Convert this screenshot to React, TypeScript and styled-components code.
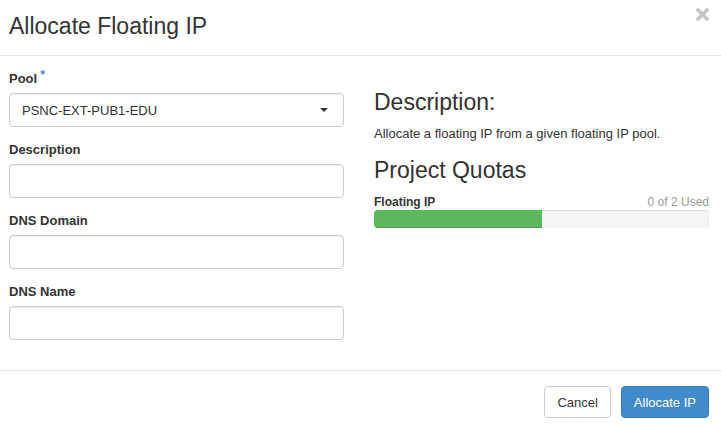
import styled, { createGlobalStyle } from "styled-components";

const GlobalStyle = createGlobalStyle`
  html, body {
    margin: 0;
    padding: 0;
    background: #fff;
  }
  body {
    font-family: "Liberation Sans", Arial, sans-serif;
    font-size: 13px;
    color: #333;
  }
  * {
    box-sizing: border-box;
  }
`;

const Modal = styled.div`
  width: 721px;
  height: 428px;
  background: #fff;
  display: flex;
  flex-direction: column;
`;

const Header = styled.header`
  height: 56px;
  padding: 0 12px 0 9px;
  border-bottom: 1px solid #e5e5e5;
  display: flex;
  align-items: center;
  justify-content: space-between;
`;

const Title = styled.h3`
  margin: 0;
  margin-top: -2px;
  font-size: 23px;
  font-weight: 400;
  color: #333;
`;

const Close = styled.button`
  border: 0;
  background: none;
  padding: 0;
  align-self: flex-start;
  margin-top: 8px;
  width: 13px;
  height: 13px;
  display: flex;
  cursor: pointer;
`;

const Body = styled.div`
  flex: 1;
  padding: 14px 12px 0 9px;
  display: grid;
  grid-template-columns: 335px 335px;
  column-gap: 30px;
`;

const FormColumn = styled.div`
  display: flex;
  flex-direction: column;
`;

const Field = styled.div`
  margin-bottom: 14px;
`;

const Label = styled.label`
  display: block;
  font-size: 13px;
  font-weight: 700;
  line-height: 18px;
  margin-bottom: 5px;
  color: #333;
`;

const Required = styled.span`
  color: #428bca;
  font-size: 12px;
  vertical-align: top;
  margin-left: 3px;
  position: relative;
  top: -4px;
`;

const Input = styled.input`
  display: block;
  width: 100%;
  height: 34px;
  padding: 6px 12px;
  border: 1px solid #ccc;
  border-radius: 4px;
  box-shadow: inset 0 1px 1px rgba(0, 0, 0, 0.075);
  font-family: inherit;
  font-size: 13px;
  color: #333;
  background: #fff;
`;

const Select = styled.div`
  height: 34px;
  padding: 0 15px 0 12px;
  border: 1px solid #ccc;
  border-radius: 4px;
  box-shadow: inset 0 1px 1px rgba(0, 0, 0, 0.075);
  display: flex;
  align-items: center;
  justify-content: space-between;
  font-size: 13px;
  color: #333;
`;

const Caret = styled.span`
  width: 0;
  height: 0;
  border-left: 4px solid transparent;
  border-right: 4px solid transparent;
  border-top: 4px solid #333;
`;

const InfoColumn = styled.div`
  padding-top: 19px;
`;

const Heading = styled.h3`
  margin: 0 0 9px;
  font-size: 23px;
  font-weight: 400;
  line-height: 27px;
  color: #333;
`;

const Paragraph = styled.p`
  margin: 0 0 15px;
  font-size: 13px;
  line-height: 17px;
`;

const QuotaRow = styled.div`
  display: flex;
  justify-content: space-between;
  align-items: baseline;
  font-size: 12px;
  line-height: 13px;
  padding-top: 3px;
  margin-bottom: 1px;
`;

const QuotaName = styled.strong`
  font-weight: 700;
  color: #333;
`;

const QuotaUsed = styled.span`
  color: #999;
`;

const Progress = styled.div`
  height: 18px;
  background: #f5f5f5;
  border-radius: 4px;
  overflow: hidden;
  box-shadow: inset 0 1px 2px rgba(0, 0, 0, 0.1);
`;

const ProgressBar = styled.div`
  height: 100%;
  background: #5cb85c;
  box-shadow: inset 0 -1px 0 rgba(0, 0, 0, 0.15);
`;

const Footer = styled.footer`
  height: 58px;
  border-top: 1px solid #e5e5e5;
  padding: 15px 12px 0 0;
  display: flex;
  justify-content: flex-end;
  align-items: flex-start;
  gap: 10px;
`;

const Button = styled.button<{ $primary?: boolean }>`
  height: 32px;
  padding: 0 12px;
  border-radius: 4px;
  font-family: inherit;
  font-size: 13px;
  border: 1px solid ${(p) => (p.$primary ? "#357ebd" : "#ccc")};
  background: ${(p) => (p.$primary ? "#428bca" : "#fff")};
  color: ${(p) => (p.$primary ? "#fff" : "#333")};
  cursor: pointer;
`;

const quota = { used: 0, requested: 1, limit: 2 };

function App() {
  const fill = ((quota.used + quota.requested) / quota.limit) * 100;

  return (
    <>
      <GlobalStyle />
      <Modal>
        <Header>
          <Title>Allocate Floating IP</Title>
          <Close aria-label="Close">
            <svg width="13" height="13" viewBox="0 0 13 13">
              <path
                d="M2 2 L11 11 M11 2 L2 11"
                stroke="#c4c4c4"
                strokeWidth="3.4"
                strokeLinecap="square"
              />
            </svg>
          </Close>
        </Header>
        <Body>
          <FormColumn>
            <Field>
              <Label>
                Pool<Required>*</Required>
              </Label>
              <Select>
                <span>PSNC-EXT-PUB1-EDU</span>
                <Caret />
              </Select>
            </Field>
            <Field>
              <Label>Description</Label>
              <Input />
            </Field>
            <Field>
              <Label>DNS Domain</Label>
              <Input />
            </Field>
            <Field>
              <Label>DNS Name</Label>
              <Input />
            </Field>
          </FormColumn>
          <InfoColumn>
            <Heading>Description:</Heading>
            <Paragraph>
              Allocate a floating IP from a given floating IP pool.
            </Paragraph>
            <Heading>Project Quotas</Heading>
            <QuotaRow>
              <QuotaName>Floating IP</QuotaName>
              <QuotaUsed>
                {quota.used} of {quota.limit} Used
              </QuotaUsed>
            </QuotaRow>
            <Progress>
              <ProgressBar style={{ width: `${fill}%` }} />
            </Progress>
          </InfoColumn>
        </Body>
        <Footer>
          <Button>Cancel</Button>
          <Button $primary>Allocate IP</Button>
        </Footer>
      </Modal>
    </>
  );
}

export default App;
